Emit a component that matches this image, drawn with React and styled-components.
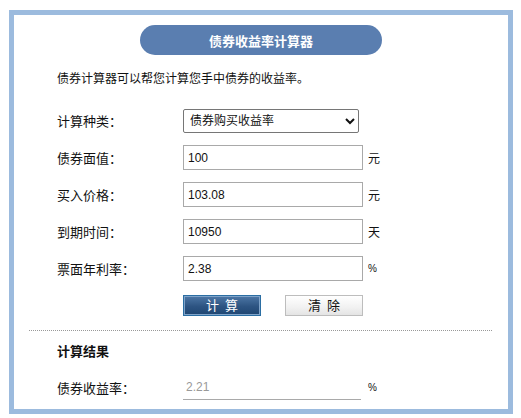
import React from 'react';
import styled, { createGlobalStyle } from 'styled-components';

const GlobalStyle = createGlobalStyle`
  body {
    margin: 0;
    background: #ffffff;
    font-family: "Liberation Sans", "Noto Sans CJK SC", sans-serif;
    color: #111;
  }
`;

const Frame = styled.div`
  margin: 10px 0 0 9px;
  width: 504px;
  height: 404px;
  box-sizing: border-box;
  border: 5px solid #9cbbde;
  padding-top: 10px;
  overflow: hidden;
`;

const Title = styled.div`
  width: 242px;
  height: 30px;
  margin: 0 auto;
  border-radius: 15px;
  background: #5a7eb0;
  color: #fff;
  font-size: 13px;
  font-weight: bold;
  display: flex;
  align-items: center;
  justify-content: center;
`;

const Intro = styled.p`
  margin: 15px 0 0 43px;
  font-size: 12px;
  line-height: 18px;
`;

const Form = styled.div`
  margin: 20px 0 0 43px;
`;

const Row = styled.div`
  display: flex;
  align-items: center;
  height: 25px;
  margin-bottom: 12px;
`;

const Label = styled.span`
  width: 126px;
  font-size: 13px;
`;

const Select = styled.select`
  width: 176px;
  height: 24px;
  box-sizing: border-box;
  border: 1px solid #767676;
  border-radius: 2px;
  font-family: "Liberation Sans", "Noto Sans CJK SC", sans-serif;
  font-size: 12px;
  color: #111;
  background: #fff;
  padding: 0 2px;
`;

const Field = styled.input`
  width: 180px;
  height: 25px;
  box-sizing: border-box;
  border: 1px solid #a9a9a9;
  padding: 0 4px;
  font-family: "Liberation Sans", "Noto Sans CJK SC", sans-serif;
  font-size: 12px;
  color: #111;
  outline: none;
`;

const Unit = styled.span`
  margin-left: 5px;
  font-size: ${(p) => (p.small ? '10px' : '12px')};
`;

const Buttons = styled.div`
  display: flex;
  gap: 24px;
  margin-left: 126px;
  height: 25px;
  align-items: center;
`;

const Button = styled.button`
  width: 78px;
  height: 21px;
  box-sizing: border-box;
  padding: 0;
  font-family: "Liberation Sans", "Noto Sans CJK SC", sans-serif;
  font-size: 13px;
  letter-spacing: 6px;
  text-indent: 6px;
  line-height: 17px;
  ${(p) =>
    p.primary
      ? `
    color: #fff;
    border: 1px solid #2b6ea3;
    box-shadow: inset 0 0 0 1px #7fa3c9;
    background: linear-gradient(#4d77a6, #2d5482 55%, #1f4672);
  `
      : `
    color: #111;
    border: 1px solid #bdbdbd;
    background: linear-gradient(#ffffff, #f1f1f1 60%, #e4e4e4);
  `}
`;

const Divider = styled.div`
  margin: 12px 16px 0 15px;
  border-top: 1px dotted #999;
`;

const ResultTitle = styled.div`
  margin: 12px 0 0 43px;
  font-size: 13px;
  font-weight: bold;
  line-height: 18px;
`;

const Result = styled.div`
  margin: 14px 0 0 43px;
  display: flex;
  align-items: center;
  height: 25px;
`;

const ResultField = styled.input`
  width: 178px;
  height: 25px;
  box-sizing: border-box;
  border: none;
  border-bottom: 1px solid #a9a9a9;
  padding: 0 3px;
  font-family: "Liberation Sans", "Noto Sans CJK SC", sans-serif;
  font-size: 12px;
  color: #999;
  background: transparent;
  outline: none;
`;

const ResultUnit = styled(Unit)`
  margin-left: 7px;
`;

const fields = [
  { label: '债券面值：', value: '100', unit: '元' },
  { label: '买入价格：', value: '103.08', unit: '元' },
  { label: '到期时间：', value: '10950', unit: '天' },
  { label: '票面年利率：', value: '2.38', unit: '%', small: true },
];

export default function App() {
  return (
    <>
      <GlobalStyle />
      <Frame>
        <Title>债券收益率计算器</Title>
        <Intro>债券计算器可以帮您计算您手中债券的收益率。</Intro>
        <Form>
          <Row>
            <Label>计算种类：</Label>
            <Select defaultValue="buy">
              <option value="buy">债券购买收益率</option>
              <option value="sell">债券出售收益率</option>
              <option value="hold">债券持有期收益率</option>
            </Select>
          </Row>
          {fields.map((f) => (
            <Row key={f.label}>
              <Label>{f.label}</Label>
              <Field defaultValue={f.value} />
              <Unit small={f.small}>{f.unit}</Unit>
            </Row>
          ))}
          <Buttons>
            <Button primary>计算</Button>
            <Button>清除</Button>
          </Buttons>
        </Form>
        <Divider />
        <ResultTitle>计算结果</ResultTitle>
        <Result>
          <Label>债券收益率：</Label>
          <ResultField defaultValue="2.21" readOnly />
          <ResultUnit small>%</ResultUnit>
        </Result>
      </Frame>
    </>
  );
}
